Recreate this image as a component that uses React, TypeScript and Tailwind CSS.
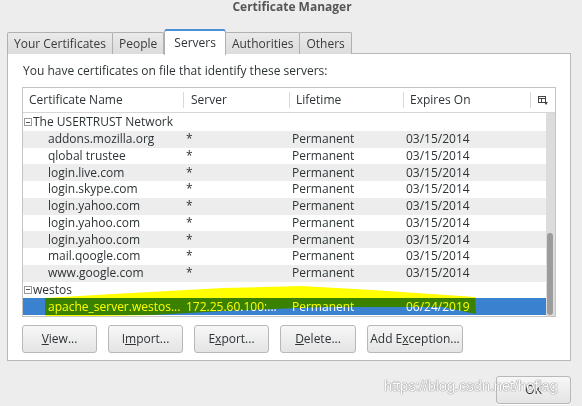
import React from 'react';

type Row = { name: string; server?: string; life?: string; exp?: string; group?: boolean; selected?: boolean };

const rows: Row[] = [
  { name: 'The USERTRUST Network', group: true },
  { name: 'addons.mozilla.org', server: '*', life: 'Permanent', exp: '03/15/2014' },
  { name: 'qlobal trustee', server: '*', life: 'Permanent', exp: '03/15/2014' },
  { name: 'login.live.com', server: '*', life: 'Permanent', exp: '03/15/2014' },
  { name: 'login.skype.com', server: '*', life: 'Permanent', exp: '03/15/2014' },
  { name: 'login.yahoo.com', server: '*', life: 'Permanent', exp: '03/15/2014' },
  { name: 'login.yahoo.com', server: '*', life: 'Permanent', exp: '03/15/2014' },
  { name: 'login.yahoo.com', server: '*', life: 'Permanent', exp: '03/15/2014' },
  { name: 'mail.qoogle.com', server: '*', life: 'Permanent', exp: '03/15/2014' },
  { name: 'www.google.com', server: '*', life: 'Permanent', exp: '03/15/2014' },
  { name: 'westos', group: true },
  { name: 'apache_server.westos...', server: '172.25.60.100:...', life: 'Permanent', exp: '06/24/2019', selected: true },
];

const tabs = ['Your Certificates', 'People', 'Servers', 'Authorities', 'Others'];

const Toggle = () => (
  <span className="inline-flex w-[8px] h-[8px] mr-[1px] border border-[#9a9a9a] items-center justify-center">
    <span className="block w-[4px] h-px bg-[#555]" />
  </span>
);

const Btn = ({ children, w }: { children: React.ReactNode; w: string }) => (
  <div className={`${w} h-[28px] flex items-center justify-center rounded-[3px] border border-[#b8b8b8] bg-gradient-to-b from-[#f7f7f7] to-[#e4e4e4] text-[#2e3436] shadow-[0_1px_0_#fff]`}>
    {children}
  </div>
);

const App: React.FC = () => {
  return (
    <div className="w-[582px] h-[406px] bg-[#ededed] overflow-hidden relative text-[12px] text-[#2e3436] font-['Open_Sans',sans-serif]">
      {/* title */}
      <div className="h-[28px] text-center font-bold text-[#555] text-[12px] leading-[14px] pl-[2px]">Certificate Manager</div>

      {/* tabs */}
      <div className="flex items-end ml-[7px] h-[26px] relative z-10">
        {tabs.map(t =>
          t === 'Servers' ? (
            <div key={t} className="h-[26px] px-[9px] flex items-center bg-white border-x border-[#b0b0b0] border-t-2 border-t-[#4a90d9] rounded-t-[3px] -mb-px">{t}</div>
          ) : (
            <div key={t} className="h-[22px] px-[6px] flex items-center bg-gradient-to-b from-[#eaeaea] to-[#dcdcdc] border-x border-t border-[#b0b0b0] rounded-t-[2px] -ml-px first:ml-0 text-[#3a3a3a]">{t}</div>
          )
        )}
      </div>

      {/* panel */}
      <div className="ml-[7px] w-[564px] h-[308px] -mt-px bg-white border border-[#b8b8b8] px-[14px] pt-[10px]">
        <div className="h-[23px] leading-[14px] pl-px">You have certificates on file that identify these servers:</div>

        {/* table */}
        <div className="relative w-[534px] h-[230px] border border-[#c4c4c4] overflow-hidden">
          <div className="flex h-[25px] items-center border-b border-[#d6d6d6] bg-white">
            <div className="w-[160px] pl-[6px]">Certificate Name</div>
            <div className="w-[106px] pl-[7px] border-l border-[#d8d8d8] h-[16px] leading-[16px]">Server</div>
            <div className="w-[114px] pl-[6px] border-l border-[#d8d8d8] h-[16px] leading-[16px]">Lifetime</div>
            <div className="w-[127px] pl-[6px] border-l border-[#d8d8d8] h-[16px] leading-[16px]">Expires On</div>
            <div className="flex-1 border-l border-[#d8d8d8] h-[16px] flex items-center justify-center">
              <svg width="10" height="9" viewBox="0 0 10 9">
                <rect x="0.5" y="0.5" width="7" height="6" fill="none" stroke="#444" />
                <line x1="0.5" y1="2.5" x2="7.5" y2="2.5" stroke="#444" />
                <line x1="3.5" y1="2.5" x2="3.5" y2="6.5" stroke="#444" />
                <path d="M6 6 L10 6 L8 9 Z" fill="#444" />
              </svg>
            </div>
          </div>
          <div className="flex">
            <div className="w-[523px] pt-px">
              {rows.map((r, i) => (
                <div
                  key={i}
                  className={`flex items-center h-[16.75px] ${r.selected ? 'bg-[#3a81d0] text-white' : i % 2 === 1 ? 'bg-[#ededed]' : 'bg-white'}`}
                >
                  {r.group ? (
                    <div className="flex items-center pl-[1px]">
                      <Toggle />
                      <span>{r.name}</span>
                    </div>
                  ) : (
                    <>
                      <div className="w-[160px] pl-[25px] whitespace-nowrap">{r.name}</div>
                      <div className="w-[106px] pl-[3px] whitespace-nowrap">{r.server}</div>
                      <div className="w-[114px] pl-[3px]">{r.life}</div>
                      <div className="pl-[3px]">{r.exp}</div>
                    </>
                  )}
                </div>
              ))}
            </div>
            <div className="w-[9px] h-[205px] bg-[#dcdcdc] relative">
              <div className="absolute left-[1px] top-[120px] w-[6px] h-[82px] rounded-full bg-[#9c9c9c]" />
            </div>
          </div>
          {/* highlighter mark */}
          <svg className="absolute left-0 top-0 mix-blend-multiply pointer-events-none" width="534" height="231" viewBox="0 0 534 231">
            <polygon
              points="22,210 90,206 200,200 278,198 350,202 452,209 453,226 420,219 300,219 200,223 130,227 22,229"
              fill="#ffff00"
            />
          </svg>
        </div>

        {/* buttons */}
        <div className="flex gap-[11px] mt-[8px]">
          <Btn w="w-[75px]"><span><span className="underline">V</span>iew...</span></Btn>
          <Btn w="w-[75px]"><span>I<span className="underline">m</span>port...</span></Btn>
          <Btn w="w-[75px]"><span>E<span className="underline">x</span>port...</span></Btn>
          <Btn w="w-[76px]"><span><span className="underline">D</span>elete...</span></Btn>
          <Btn w="w-[96px]"><span>Add E<span className="underline">x</span>ception...</span></Btn>
        </div>
      </div>

      {/* OK */}
      <div className="flex justify-end mr-[11px] mt-[15px]">
        <Btn w="w-[75px]"><span>OK</span></Btn>
      </div>

      {/* watermark */}
      <div className="absolute left-[384px] top-[375px] text-[15px] text-white font-['Liberation_Sans',sans-serif] tracking-[-0.2px] [text-shadow:0_0_1px_#666,0_0_1px_#888]">https://blog.csdn.net/hoflag</div>
    </div>
  );
};

export default App;
